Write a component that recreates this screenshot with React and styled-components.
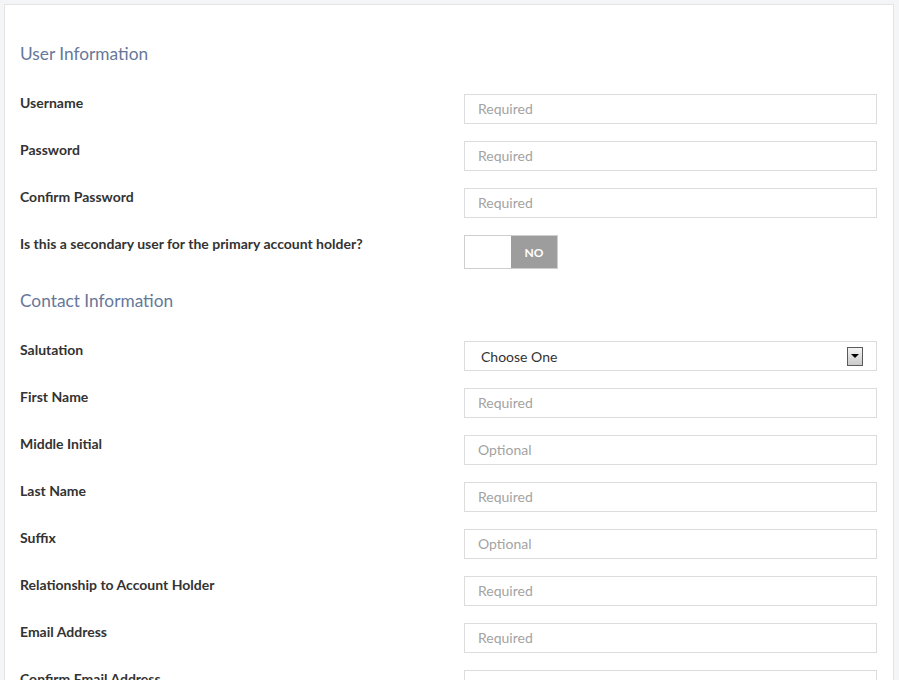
import React from "react";
import styled, { createGlobalStyle } from "styled-components";

const GlobalStyle = createGlobalStyle`
  html, body {
    margin: 0;
    padding: 0;
    background: #f4f5f7;
  }
  body {
    font-family: "Lato", "Liberation Sans", sans-serif;
    color: #333;
  }
  * { box-sizing: border-box; }
`;

const Card = styled.div`
  margin: 4px 5px 0 4px;
  background: #fff;
  border: 1px solid #e4e4e4;
  border-bottom: none;
  padding: 39px 16px 40px 15px;
  min-height: 676px;
`;

const Section = styled.section`
  display: flex;
  flex-direction: column;
  gap: 17px;
  & + & {
    margin-top: 22px;
  }
`;

const Heading = styled.h2`
  margin: 0 0 13px 0;
  font-size: 17.3px;
  line-height: 20px;
  font-weight: 400;
  color: #667899;
`;

const Row = styled.div`
  display: grid;
  grid-template-columns: 1fr 413px;
  align-items: start;
`;

const Label = styled.label`
  font-size: 14px;
  font-weight: 700;
  line-height: 18px;
  color: #333;
`;

const Input = styled.input`
  display: block;
  width: 100%;
  height: 30px;
  border: 1px solid #dcdcdc;
  border-radius: 0;
  padding: 0 13px 2px 13px;
  font-family: "Lato", "Liberation Sans", sans-serif;
  font-size: 14px;
  color: #333;
  background: #fff;
  outline: none;
  &::placeholder {
    color: #a3a3a3;
  }
`;

const SelectBox = styled.div`
  display: flex;
  align-items: center;
  justify-content: space-between;
  height: 30px;
  border: 1px solid #dcdcdc;
  padding: 0 13px 0 16px;
  font-size: 14px;
  color: #333;
`;

const ArrowBox = styled.span`
  display: flex;
  align-items: center;
  justify-content: center;
  width: 16px;
  height: 19px;
  border: 1px solid #5a5a5a;
  background: linear-gradient(#f4f4f4, #c9c9c9);
  &::after {
    content: "";
    width: 0;
    height: 0;
    border-left: 4px solid transparent;
    border-right: 4px solid transparent;
    border-top: 4px solid #000;
  }
`;

const Toggle = styled.div`
  display: flex;
  width: 94px;
  height: 34px;
  border: 1px solid #cfcfcf;
  background: #fff;
`;

const Knob = styled.span`
  flex: 0 0 46px;
  background: #fff;
`;

const ToggleState = styled.span`
  flex: 1;
  display: flex;
  align-items: center;
  justify-content: center;
  background: #9d9d9d;
  color: #fff;
  font-size: 12px;
  font-weight: 700;
`;

const userFields = [
  ["Username", "Required"],
  ["Password", "Required"],
  ["Confirm Password", "Required"],
];

const contactFields = [
  ["First Name", "Required"],
  ["Middle Initial", "Optional"],
  ["Last Name", "Required"],
  ["Suffix", "Optional"],
  ["Relationship to Account Holder", "Required"],
  ["Email Address", "Required"],
  ["Confirm Email Address", "Required"],
];

export default function App() {
  return (
    <>
      <GlobalStyle />
      <Card>
        <Section>
          <Heading>User Information</Heading>
          {userFields.map(([label, ph]) => (
            <Row key={label}>
              <Label>{label}</Label>
              <Input placeholder={ph} type={label.includes("Password") ? "password" : "text"} />
            </Row>
          ))}
          <Row>
            <Label>Is this a secondary user for the primary account holder?</Label>
            <Toggle>
              <Knob />
              <ToggleState>NO</ToggleState>
            </Toggle>
          </Row>
        </Section>
        <Section>
          <Heading>Contact Information</Heading>
          <Row>
            <Label>Salutation</Label>
            <SelectBox>
              <span>Choose One</span>
              <ArrowBox />
            </SelectBox>
          </Row>
          {contactFields.map(([label, ph]) => (
            <Row key={label}>
              <Label>{label}</Label>
              <Input placeholder={ph} />
            </Row>
          ))}
        </Section>
      </Card>
    </>
  );
}
